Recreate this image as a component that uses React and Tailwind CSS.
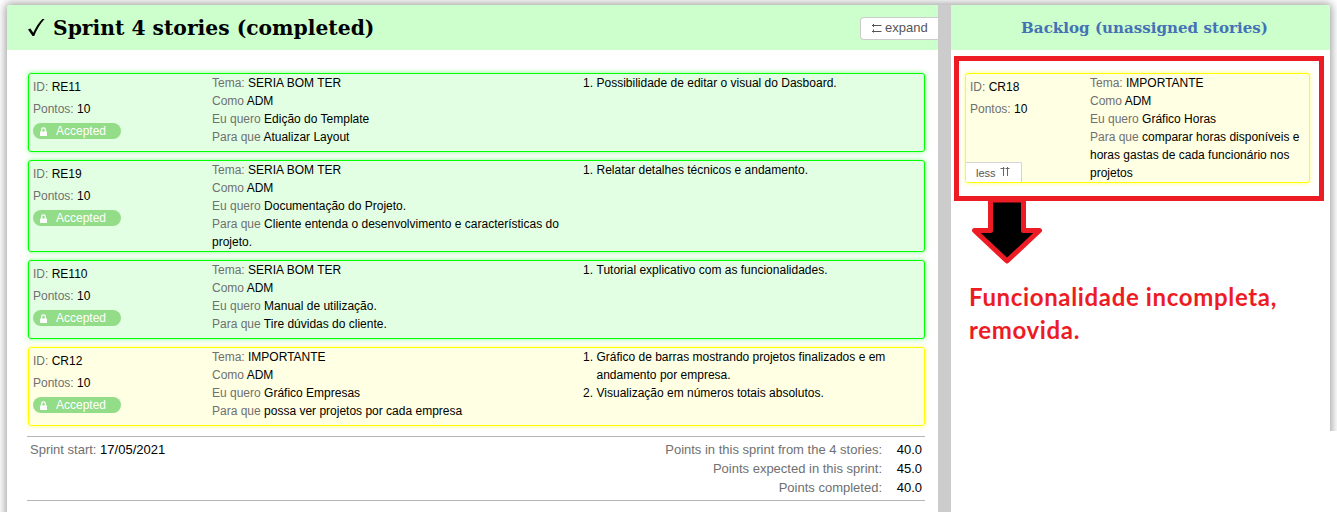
import React from "react";

const stories = [
  {
    id: "RE11",
    theme: "SERIA BOM TER",
    want: "Edição do Template",
    goal: "Atualizar Layout",
    tone: "green",
    criteria: ["Possibilidade de editar o visual do Dasboard."],
  },
  {
    id: "RE19",
    theme: "SERIA BOM TER",
    want: "Documentação do Projeto.",
    goal: "Cliente entenda o desenvolvimento e características do projeto.",
    tone: "green",
    criteria: ["Relatar detalhes técnicos e andamento."],
  },
  {
    id: "RE110",
    theme: "SERIA BOM TER",
    want: "Manual de utilização.",
    goal: "Tire dúvidas do cliente.",
    tone: "green",
    criteria: ["Tutorial explicativo com as funcionalidades."],
  },
  {
    id: "CR12",
    theme: "IMPORTANTE",
    want: "Gráfico Empresas",
    goal: "possa ver projetos por cada empresa",
    tone: "yellow",
    criteria: [
      "Gráfico de barras mostrando projetos finalizados e em andamento por empresa.",
      "Visualização em números totais absolutos.",
    ],
  },
];

const totals = [
  ["Points in this sprint from the 4 stories:", "40.0"],
  ["Points expected in this sprint:", "45.0"],
  ["Points completed:", "40.0"],
];

const tones = {
  green: "border-[#00ff00] bg-[#e3ffe3] shadow-[0_0_5px_rgba(0,255,0,0.5)]",
  yellow: "border-[#ffff00] bg-[#ffffe3] shadow-[0_0_5px_rgba(255,255,0,0.5)]",
};

function Label({ children }) {
  return <span className="text-[#707070]">{children} </span>;
}

function Ident({ id }) {
  return (
    <>
      <div>
        <Label>ID:</Label>
        {id}
      </div>
      <div>
        <Label>Pontos:</Label>10
      </div>
    </>
  );
}

function Narrative({ theme, want, goal }) {
  return (
    <>
      <div><Label>Tema:</Label>{theme}</div>
      <div><Label>Como</Label>ADM</div>
      <div><Label>Eu quero</Label>{want}</div>
      <div><Label>Para que</Label>{goal}</div>
    </>
  );
}

function Accepted() {
  return (
    <div className="mt-[3px] flex h-4 w-[88px] items-center rounded-full bg-[#93dc88] pl-[7px] leading-4 text-white">
      <svg className="mt-px h-[9px] w-[7px]" viewBox="0 0 7 9">
        <path d="M0 4.5h7V9H0z" fill="#fff" />
        <path d="M1.7 5V2.6a1.8 1.8 0 0 1 3.6 0V5" fill="none" stroke="#fff" strokeWidth="1.3" />
      </svg>
      <span className="ml-[9px]">Accepted</span>
    </div>
  );
}

function StoryCard({ story }) {
  return (
    <div className={`flex min-h-[79px] rounded-[3px] border ${tones[story.tone]}`}>
      <div className="w-[183px] shrink-0 pl-1 pt-[2px] leading-[22px]">
        <Ident id={story.id} />
        <Accepted />
      </div>
      <div className="w-[356px] shrink-0">
        <Narrative {...story} />
      </div>
      <ol className="ml-[15px] w-[310px]">
        {story.criteria.map((text, i) => (
          <li key={text} className="flex">
            <span className="w-[13.5px] shrink-0">{i + 1}.</span>
            <span>{text}</span>
          </li>
        ))}
      </ol>
    </div>
  );
}

export default function App() {
  return (
    <div className="relative h-[512px] w-[1337px] overflow-hidden bg-white pl-[7px] pt-[5px] font-['Liberation_Sans',Arial,sans-serif] text-xs leading-[18px] text-black">
      <div className="flex h-[520px] w-[1323px] rounded-[3px] bg-white shadow-[0_0_8px_2px_rgba(0,0,0,0.36)]">
        <section className="w-[931px] shrink-0">
          <header className="flex h-[45px] items-center justify-between overflow-hidden rounded-tl-[3px] bg-[#ccffcc] pl-[21px]">
            <h1 className="flex items-center whitespace-nowrap font-['DejaVu_Serif',serif] text-[20.3px] font-bold">
              <svg className="mr-2 h-[18px] w-[17px]" viewBox="0 0 17 18">
                <path d="M0 10.5 2.4 9.4 5.3 13.7C7.6 8.6 10.7 3.6 14.4 0H16.6C12.3 4.9 8.5 10.9 6.2 17H4.5Z" fill="#000" />
              </svg>
              <span>Sprint 4 stories (completed)</span>
            </h1>
            <button className="mt-px flex h-[23px] w-[78px] items-center rounded-l-[4px] border border-r-0 border-[#ccc] bg-white pl-[10px] text-[13px] leading-5 text-[#555]">
              <svg className="mr-[3px] h-[9px] w-[11px]" viewBox="0 0 11 9" fill="none" stroke="#555">
                <path d="M1 1.5H10.5M2.5 0V3M1 7.5H10.5M2.5 5.5V8.5" />
              </svg>
              expand
            </button>
          </header>
          <div className="ml-[21px] mt-[23px] flex w-[897px] flex-col gap-2">
            {stories.map((s) => (
              <StoryCard key={s.id} story={s} />
            ))}
          </div>
          <footer className="ml-5 mt-[10px] flex h-[65px] w-[898px] justify-between border-y border-[#b5b5b5] pl-[3px] pr-[3px] pt-[3px] text-[13px] leading-[19px]">
            <div><Label>Sprint start:</Label>17/05/2021</div>
            <div className="text-right">
              {totals.map(([label, value]) => (
                <div key={label} className="flex justify-end">
                  <span className="text-[#707070]">{label}</span>
                  <span className="w-10">{value}</span>
                </div>
              ))}
            </div>
          </footer>
        </section>
        <div className="w-[13px] shrink-0 bg-[#ccc]" />
        <section className="w-[379px] shrink-0">
          <header className="flex h-[45px] items-center justify-center rounded-tr-[3px] bg-[#ccffcc] pl-2">
            <h2 className="whitespace-nowrap font-['DejaVu_Serif',serif] text-[15.1px] font-bold text-[#4671b5]">
              Backlog (unassigned stories)
            </h2>
          </header>
          <div className="ml-[3px] mt-[6px] h-[145px] w-[370px] border-[5px] border-[#ed1c24] pl-[6px] pt-3">
            <div className={`flex h-[110px] w-[345px] rounded-[3px] border ${tones.yellow}`}>
              <div className="flex w-[124px] shrink-0 flex-col justify-between">
                <div className="pl-1 pt-[2px] leading-[22px]">
                  <Ident id="CR18" />
                </div>
                <div className="flex h-5 w-14 items-center rounded-tr-[2px] border-r border-t border-[#d4d4d4] bg-white pl-[10px] text-[11px] text-[#555]">
                  less
                  <svg className="mb-[3px] ml-1 h-[10px] w-[10px]" viewBox="0 0 10 10" fill="none" stroke="#666">
                    <path d="M3.5 10V1M.5 2.5H4.5M7.5 10V1M5.5 2.5H9.5" />
                  </svg>
                </div>
              </div>
              <div className="w-[217px]">
                <Narrative theme="IMPORTANTE" want="Gráfico Horas" goal="comparar horas disponíveis e horas gastas de cada funcionário nos projetos" />
              </div>
            </div>
          </div>
          <svg className="ml-[21px] block h-[63px] w-[70px]" viewBox="0 0 70 63">
            <path d="M18.5-1V29.5H2.5L35 60 67.5 29.5H51.5V-1Z" fill="#000" stroke="#ed1c24" strokeWidth="5" strokeLinejoin="round" />
            <path d="M16 0H54" stroke="#ed1c24" strokeWidth="2" />
          </svg>
          <p className="ml-[18px] mt-4 whitespace-nowrap font-['Lato',sans-serif] text-[24px] font-bold leading-[33px] tracking-[0.65px] text-[#ed1c24]">
            Funcionalidade incompleta,
            <br />
            removida.
          </p>
        </section>
      </div>
      <div className="absolute bottom-0 right-0 h-[81px] w-[7px] bg-white" />
    </div>
  );
}
